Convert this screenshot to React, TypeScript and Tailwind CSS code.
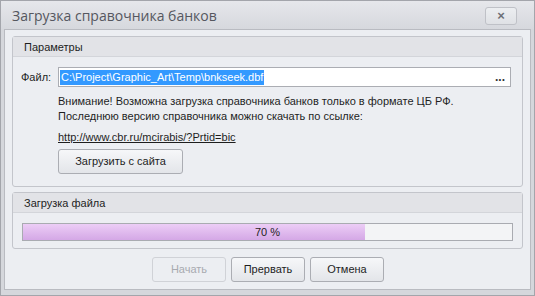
const font = { fontFamily: "'Liberation Sans', Arial, sans-serif" };

const GroupBox = ({ title, children, className }: { title: string; children: React.ReactNode; className?: string }) => (
  <div className={"mx-[7px] rounded-[3px] border border-[#c3c5cb] bg-[#eceef2] " + (className ?? "")}>
    <div className="h-[20px] border-b border-[#d3d5da] bg-[#e2e3e7] pl-[11px] text-[11px] leading-[20px] text-[#1e1e1e]">
      {title}
    </div>
    {children}
  </div>
);

const DlgButton = ({ label, disabled }: { label: string; disabled?: boolean }) => (
  <button
    className={
      "h-[25px] w-[74px] rounded-[3px] border text-[11px] " +
      (disabled
        ? "border-[#d0d2d7] bg-[#eceef2] text-[#a8aab0]"
        : "border-[#abadb3] bg-gradient-to-b from-[#f6f7f9] to-[#e3e5e9] text-[#1e1e1e]")
    }
  >
    {label}
  </button>
);

export default function App() {
  return (
    <div className="w-[535px] h-[296px] flex flex-col border border-[#a3a5ab] bg-[#d5d7dc]" style={font}>
      <div className="h-[28px] shrink-0 flex items-center justify-between bg-gradient-to-b from-[#e6e7eb] to-[#d6d8dd] pl-[11px] pr-[17px]">
        <span className="text-[14px] text-[#55575f]" style={{ fontFamily: "'Open Sans', 'Liberation Sans', sans-serif" }}>
          Загрузка справочника банков
        </span>
        <div className="w-[32px] h-[18px] mt-[1px] rounded-[3px] border border-[#bfc1c7] bg-gradient-to-b from-[#eceef1] to-[#dfe1e5] flex items-center justify-center text-[13px] font-bold leading-none text-[#6d6f76]">
          ×
        </div>
      </div>
      <div className="flex-1 mx-[3px] mb-[5px] border border-[#b9bbc1] bg-[#eceef2] flex flex-col pt-[6px]">
        <GroupBox title="Параметры" className="h-[151px]">
          <div className="flex items-center pt-[10px] pl-[8px] pr-[11px]">
            <span className="w-[37px] text-[11px] text-[#1e1e1e]">Файл:</span>
            <div className="flex-1 h-[20px] border border-[#abadb3] bg-white flex items-center pl-[1px] pr-[5px]">
              <span className="bg-[#3399ff] text-white text-[11px] leading-[15px] px-[1px]">
                C:\Project\Graphic_Art\Temp\bnkseek.dbf
              </span>
              <span className="ml-auto text-[12px] font-bold text-[#333] leading-none">...</span>
            </div>
          </div>
          <div className="pl-[45px] pt-[7px] text-[11px] leading-[15px] text-[#1e1e1e]">
            <div>Внимание! Возможна загрузка справочника банков только в формате ЦБ РФ.</div>
            <div>Последнюю версию справочника можно скачать по ссылке:</div>
            <div className="mt-[6px] underline">http://www.cbr.ru/mcirabis/?Prtid=bic</div>
            <div className="mt-[4px]">
              <button className="h-[25px] w-[125px] rounded-[3px] border border-[#abadb3] bg-gradient-to-b from-[#f6f7f9] to-[#e3e5e9] text-[11px] text-[#1e1e1e]">
                Загрузить с сайта
              </button>
            </div>
          </div>
        </GroupBox>
        <GroupBox title="Загрузка файла" className="mt-[5px] h-[57px]">
          <div className="px-[9px] pt-[10px]">
            <div className="relative h-[18px] border border-[#a9abb1] bg-[#f3f4f6]">
              <div className="h-full w-[70%] bg-gradient-to-b from-[#eccdf6] to-[#d4a8e6]" />
              <div className="absolute inset-0 flex items-center justify-center text-[11px] text-[#1e1e1e]">70 %</div>
            </div>
          </div>
        </GroupBox>
        <div className="flex gap-[5px] pl-[147px] pt-[8px]">
          <DlgButton label="Начать" disabled />
          <DlgButton label="Прервать" />
          <DlgButton label="Отмена" />
        </div>
      </div>
    </div>
  );
}
